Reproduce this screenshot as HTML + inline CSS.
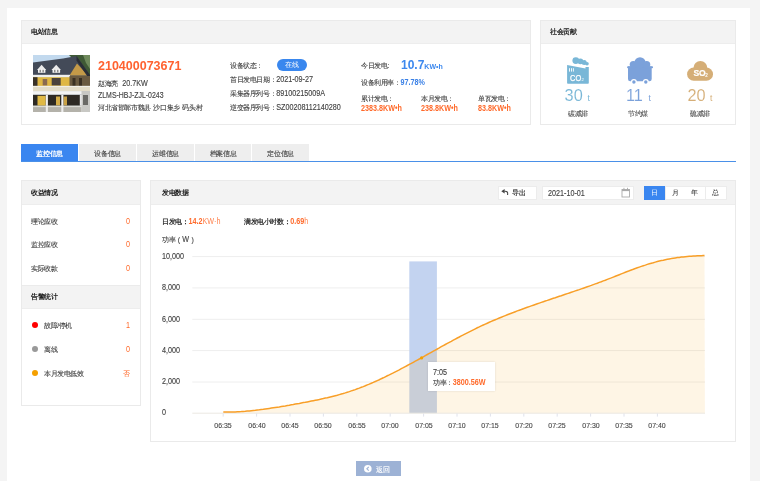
<!DOCTYPE html>
<html><head><meta charset="utf-8">
<style>
*{margin:0;padding:0;box-sizing:border-box}
html,body{width:760px;height:481px;overflow:hidden;background:#f4f4f4;font-family:"Liberation Sans",sans-serif;font-size:7px;color:#555}
.a{position:absolute;white-space:nowrap;will-change:transform}
#wrap{position:absolute;left:7px;top:8px;width:743px;height:480px;background:#fff}
.panel{position:absolute;border:1px solid #eaeaea;background:#fff}
.ph{position:absolute;left:0;top:0;right:0;background:#f3f3f3;border-bottom:1px solid #ededed}
.ht{font-weight:bold;color:#222;font-size:7px;line-height:10.4px;letter-spacing:-0.4px}
.t{line-height:12px;font-size:7px;letter-spacing:-0.4px;color:#444;-webkit-text-stroke:0.12px}
i{font-style:normal}
.t i{font-size:7.2px;letter-spacing:0;display:inline-block;transform:scaleY(1.18);transform-origin:50% 75%}
.t b,.t.bo,.t.or{-webkit-text-stroke:0}
.or{color:#ff6a2b}
.xl i{display:inline-block;transform:scaleY(1.15);transform-origin:50% 75%}
.xl{width:30px;text-align:center;line-height:10px;font-size:7px;color:#444;-webkit-text-stroke:0.1px}
.tab{position:absolute;will-change:transform;top:144px;height:17px;background:#eeeeee;text-align:center;line-height:19px;font-size:7px;color:#444;letter-spacing:-0.25px;text-indent:0.25px;-webkit-text-stroke:0.12px}
</style></head><body>
<div id="wrap"></div>

<!-- 电站信息 panel -->
<div class="panel" style="left:21px;top:20px;width:510px;height:105px">
  <div class="ph" style="height:22.5px"></div>
</div>
<div class="a ht" style="left:31px;top:27px">电站信息</div>

<!-- house photo -->
<svg class="a" style="left:33px;top:55px" width="57" height="57" viewBox="0 0 57 57">
 <rect width="57" height="57" fill="#c2d9ee"/>
 <polygon points="36,0 57,0 57,30 44,30 40,4" fill="#3f5a36"/>
 <polygon points="50,0 57,0 57,14 53,8" fill="#6f8a5c"/>
 <polygon points="0,7.5 30,3.5 43.5,1 57,20 57,22 0,22" fill="#434a58"/>
 <polygon points="44,8.5 36.5,20.5 55,20.5" fill="#c49a48"/>
 <polygon points="43.5,1 57,20 57,23 55.5,23 43.5,5.5" fill="#2a2e36"/>
 <polygon points="4,15 8.6,9.8 13.2,15" fill="#ececec"/>
 <rect x="5" y="14.2" width="7.4" height="3.6" fill="#f4f4f4"/>
 <rect x="6.5" y="14.8" width="1.5" height="2.6" fill="#8d8d8d"/><rect x="9.4" y="14.8" width="1.5" height="2.6" fill="#8d8d8d"/>
 <polygon points="18.5,15 23.2,9.8 27.9,15" fill="#ececec"/>
 <rect x="19.5" y="14.2" width="7.6" height="3.6" fill="#f4f4f4"/>
 <rect x="21" y="14.8" width="1.5" height="2.6" fill="#8d8d8d"/><rect x="24" y="14.8" width="1.5" height="2.6" fill="#8d8d8d"/>
 <rect x="0" y="19.8" width="37" height="2.4" fill="#efefef"/>
 <rect x="0" y="22.2" width="37" height="9.3" fill="#dfb744"/>
 <rect x="36.5" y="21" width="20.5" height="10.5" fill="#6a5a40"/>
 <rect x="0" y="22.2" width="4.5" height="9.3" fill="#3a3228"/>
 <rect x="9.7" y="24" width="4.5" height="6.5" fill="#8a6a50"/>
 <rect x="18.7" y="23" width="9" height="7.5" fill="#4b423c"/>
 <rect x="39.5" y="23" width="3" height="8" fill="#3a3022"/><rect x="46" y="23" width="3" height="8" fill="#3a3022"/>
 <rect x="0" y="30.8" width="57" height="5.8" fill="#e4ddc8"/>
 <rect x="0" y="31.2" width="57" height="0.7" fill="#f6f6f6"/>
 <rect x="0" y="36.3" width="57" height="3.5" fill="#f4f4f4"/>
 <rect x="0" y="39.8" width="57" height="11" fill="#2e2a24"/>
 <rect x="4.5" y="40.8" width="8.2" height="10" fill="#e0b945"/>
 <rect x="23" y="41.5" width="4" height="9" fill="#d4ad48"/>
 <rect x="30.5" y="41.5" width="3.5" height="9" fill="#c9a145"/>
 <rect x="48.5" y="36" width="8.5" height="21" fill="#c8c8c4"/>
 <rect x="50" y="40" width="5" height="10" fill="#6a6a66"/>
 <rect x="12.8" y="39.8" width="2.1" height="17.2" fill="#f2f2f2"/>
 <rect x="28.3" y="39.8" width="2.1" height="17.2" fill="#f2f2f2"/>
 <rect x="46.8" y="39.8" width="2.1" height="17.2" fill="#e6e6e6"/>
 <rect x="0" y="50.5" width="48.5" height="6.5" fill="#b4b2aa"/>
 <rect x="0" y="51.2" width="48.5" height="0.9" fill="#e6e6e2"/>
 <rect x="12.8" y="50.5" width="2.1" height="6.5" fill="#eeeeee"/><rect x="28.3" y="50.5" width="2.1" height="6.5" fill="#eeeeee"/>
</svg>

<div class="a" style="left:98px;top:58px;font-size:12.5px;font-weight:bold;color:#ff6230;line-height:16px"><i>210400073671</i></div>
<div class="a t" style="left:98px;top:78px">赵海亮<i style="margin-left:4.5px">20.7KW</i></div>
<div class="a t" style="left:98px;top:90px"><i style="font-size:6.95px">ZLMS-HBJ-ZJL-0243</i></div>
<div class="a t" style="left:98px;top:102px">河北省邯郸市魏县<span style="margin-left:2.6px">沙口集乡</span><span style="margin-left:2.6px">码头村</span></div>

<div class="a t" style="left:230px;top:60px">设备状态：</div>
<div class="a" style="left:277px;top:59px;width:30px;height:12px;border-radius:6px;background:#3987ee;color:#fff;text-align:center;line-height:12px;font-size:7px">在线</div>
<div class="a t" style="left:230px;top:74px">首日发电日期：<i>2021-09-27</i></div>
<div class="a t" style="left:230px;top:88px">采集器序列号：<i>89100215009A</i></div>
<div class="a t" style="left:230px;top:102px">逆变器序列号：<i>SZ00208112140280</i></div>

<div class="a t" style="left:361px;top:60px">今日发电:</div>
<div class="a" style="left:401px;top:57px;line-height:16px;color:#3c88ee;font-weight:bold"><span style="font-size:12px"><i>10.7</i></span><span style="font-size:7px"><i>KW•h</i></span></div>
<div class="a t" style="left:361px;top:77px">设备利用率：<b style="color:#3a80e6"><i>97.78%</i></b></div>
<div class="a t" style="left:361px;top:93px">累计发电：</div>
<div class="a t or bo" style="left:361px;top:103px;font-weight:bold"><i>2383.8KW•h</i></div>
<div class="a t" style="left:421px;top:93px">本月发电：</div>
<div class="a t or bo" style="left:421px;top:103px;font-weight:bold"><i>238.8KW•h</i></div>
<div class="a t" style="left:478px;top:93px">单瓦发电：</div>
<div class="a t or bo" style="left:478px;top:103px;font-weight:bold"><i>83.8KW•h</i></div>

<!-- 社会贡献 -->
<div class="panel" style="left:540px;top:20px;width:196px;height:105px">
  <div class="ph" style="height:22.5px"></div>
</div>
<div class="a ht" style="left:550px;top:27px">社会贡献</div>


<!-- social icons -->
<svg class="a" style="left:0;top:0" width="760" height="130" viewBox="0 0 760 130">
 <g fill="#79b7d7">
  <path d="M567.1,65.1 L585.5,68.5 L585.5,67 L588.8,67 L588.8,83 Q588.8,83.8 588,83.8 L567.9,83.8 Q567.1,83.8 567.1,83 Z"/>
  <circle cx="575.8" cy="60.6" r="3.4"/><circle cx="580.4" cy="61.3" r="2.9"/><circle cx="584.2" cy="62.5" r="2.5"/><circle cx="587" cy="63.8" r="1.8"/>
 </g>
 <g fill="#fff"><rect x="569.1" y="68.2" width="0.9" height="3.4"/><rect x="571" y="68.2" width="0.9" height="3.4"/><rect x="572.9" y="68.2" width="0.9" height="3.4"/></g>
 <text x="570" y="80.6" font-family="Liberation Sans" font-size="9" fill="#fff" stroke="#fff" stroke-width="0.25" textLength="11.2" lengthAdjust="spacingAndGlyphs">CO</text>
 <text x="581.6" y="80.9" font-family="Liberation Sans" font-size="4.2" fill="#fff">2</text>

 <g fill="#7ba1da">
  <rect x="627.1" y="66.2" width="25.9" height="2" rx="0.8"/>
  <path d="M628,66.5 L651.7,66.5 L651.7,79 Q651.7,81.3 649.4,81.3 L630.3,81.3 Q628,81.3 628,79 Z"/>
  <circle cx="633.4" cy="64.6" r="3.7"/><circle cx="640" cy="62.8" r="5.6"/><circle cx="646.6" cy="64.6" r="3.7"/>
 </g>
 <circle cx="633.9" cy="82" r="3" fill="#fff"/><circle cx="645.8" cy="82" r="3" fill="#fff"/>
 <circle cx="633.9" cy="82" r="1.7" fill="#7ba1da"/><circle cx="645.8" cy="82" r="1.7" fill="#7ba1da"/>

 <g fill="#d5ae77">
  <circle cx="700.4" cy="67.9" r="6.9"/>
  <rect x="687.1" y="67.5" width="25.9" height="13.3" rx="6.6"/>
 </g>
 <text x="693.4" y="76.4" font-family="Liberation Sans" font-size="8.6" font-weight="bold" fill="#fff" stroke="#fff" stroke-width="0.2">SO</text>
 <text x="705.2" y="76.6" font-family="Liberation Sans" font-size="4.6" font-weight="bold" fill="#fff">2</text>
</svg>
<svg class="a" style="left:0;top:0" width="760" height="130" viewBox="0 0 760 130">
 <g font-family="Liberation Sans" stroke="#fff" stroke-width="0.1">
 <text x="564.6" y="101.4" font-size="16.3" fill="#79b7d7">30</text><text x="587.4" y="101.4" font-size="8.5" fill="#79b7d7" stroke-width="0">t</text>
 <text x="626" y="101.4" font-size="16.3" fill="#7ba1da">11</text><text x="648.6" y="101.4" font-size="8.5" fill="#7ba1da" stroke-width="0">t</text>
 <text x="687.4" y="101.4" font-size="16.3" fill="#d5ae77">20</text><text x="710" y="101.4" font-size="8.5" fill="#d5ae77" stroke-width="0">t</text>
 </g>
</svg>
<div class="a t" style="left:567.5px;top:108px;color:#555">碳减排</div>
<div class="a t" style="left:627.5px;top:108px;color:#555">节约煤</div>
<div class="a t" style="left:690px;top:108px;color:#555">硫减排</div>

<!-- tabs -->
<div class="tab" style="left:21px;width:57px;background:#3a86f0;color:#fff;font-weight:bold;-webkit-text-stroke:0">监控信息</div>
<div class="tab" style="left:79px;width:57px">设备信息</div>
<div class="tab" style="left:137px;width:57px">运维信息</div>
<div class="tab" style="left:195px;width:56px">档案信息</div>
<div class="tab" style="left:252px;width:57px">定位信息</div>
<div class="a" style="left:21px;top:160.6px;width:715px;height:1.4px;background:#4a90e8"></div>

<!-- 收益情况 -->
<div class="panel" style="left:21px;top:180px;width:120px;height:226px">
  <div class="ph" style="height:24px"></div>
  <div class="ph" style="top:104px;height:24px;border-top:1px solid #ebebeb"></div>
</div>
<div class="a ht" style="left:31px;top:188px">收益情况</div>
<div class="a t" style="left:31px;top:216px">理论应收</div><div class="a t or" style="left:126px;top:216px"><i>0</i></div>
<div class="a t" style="left:31px;top:239px">监控应收</div><div class="a t or" style="left:126px;top:239px"><i>0</i></div>
<div class="a t" style="left:31px;top:263px">实际收款</div><div class="a t or" style="left:126px;top:263px"><i>0</i></div>
<div class="a ht" style="left:31px;top:292px">告警统计</div>
<div class="a" style="left:32px;top:322px;width:6px;height:6px;border-radius:3px;background:#f00"></div>
<div class="a t" style="left:44px;top:320px">故障/停机</div><div class="a t or" style="left:126px;top:320px"><i>1</i></div>
<div class="a" style="left:32px;top:346px;width:6px;height:6px;border-radius:3px;background:#999"></div>
<div class="a t" style="left:44px;top:344px">离线</div><div class="a t or" style="left:126px;top:344px"><i>0</i></div>
<div class="a" style="left:32px;top:370px;width:6px;height:6px;border-radius:3px;background:#f5a000"></div>
<div class="a t" style="left:44px;top:368px">本月发电低效</div><div class="a t or" style="left:123px;top:368px">否</div>

<!-- 发电数据 -->
<div class="panel" style="left:150px;top:180px;width:586px;height:262px">
  <div class="ph" style="height:24px"></div>
</div>
<div class="a ht" style="left:162px;top:188px">发电数据</div>



<!-- chart controls -->
<div class="a" style="left:497.5px;top:185.8px;width:38.5px;height:13.6px;background:#fff;border:1px solid #ececec"></div>
<svg class="a" style="left:500px;top:188px" width="10" height="9" viewBox="0 0 10 9"><path d="M4.3,3.3 C6.6,3 8.2,3.6 7.6,7" fill="none" stroke="#444" stroke-width="1.1"/><path d="M1.3,3.3 L4.6,1.1 L4.6,5.5 Z" fill="#444"/></svg>
<div class="a t" style="left:512.3px;top:187.3px;color:#222;letter-spacing:-0.3px">导出</div>
<div class="a" style="left:541.8px;top:185.8px;width:91.5px;height:13.6px;background:#fff;border:1px solid #ececec"></div>
<div class="a t" style="left:548.3px;top:187.5px;color:#444"><i>2021-10-01</i></div>
<svg class="a" style="left:621px;top:187px" width="10" height="11" viewBox="0 0 10 11"><rect x="1" y="2.5" width="7.5" height="7.5" fill="none" stroke="#aaa" stroke-width="0.9"/><rect x="1" y="2.5" width="7.5" height="1.6" fill="#aaa"/><rect x="2.5" y="0.8" width="0.9" height="2.5" fill="#aaa"/><rect x="6.1" y="0.8" width="0.9" height="2.5" fill="#aaa"/></svg>
<div class="a" style="left:644.2px;top:185.6px;width:20.5px;height:14px;background:#3a86f0;color:#fff;text-align:center;line-height:14px">日</div>
<div class="a" style="left:664.7px;top:185.6px;width:20.5px;height:14px;background:#fff;border:1px solid #ececec;color:#222;text-align:center;line-height:12px">月</div>
<div class="a" style="left:685.2px;top:185.6px;width:20.5px;height:14px;background:#fff;border:1px solid #ececec;border-left:none;color:#222;text-align:center;line-height:12px">年</div>
<div class="a" style="left:705.7px;top:185.6px;width:20.5px;height:14px;background:#fff;border:1px solid #ececec;border-left:none;color:#222;text-align:center;line-height:12px">总</div>

<!-- chart -->
<div class="a t" style="left:162px;top:216px"><b style="color:#333">日发电：</b><b class="or"><i>14.2</i></b><span class="or" style="-webkit-text-stroke:0;color:#ff8450"><i>KW·h</i></span></div>
<div class="a t" style="left:244px;top:216px"><b style="color:#333">满发电小时数：</b><b class="or"><i>0.69</i></b><span class="or" style="-webkit-text-stroke:0;color:#ff8450"><i>h</i></span></div>
<div class="a t" style="left:162px;top:234px">功率<span style="margin-left:2.5px">(</span><i style="margin:0 2.5px">W</i>)</div>
<div class="a t yl" style="left:162.2px;top:250.8px"><i>10,000</i></div><div class="a t yl" style="left:162.2px;top:282.1px"><i>8,000</i></div><div class="a t yl" style="left:162.2px;top:313.5px"><i>6,000</i></div><div class="a t yl" style="left:162.2px;top:344.8px"><i>4,000</i></div><div class="a t yl" style="left:162.2px;top:376.2px"><i>2,000</i></div><div class="a t yl" style="left:162.2px;top:406.7px"><i>0</i></div>
<svg class="a" style="left:0;top:0" width="760" height="481" viewBox="0 0 760 481">
<line x1="192.3" y1="256.6" x2="705" y2="256.6" stroke="#eeeeee" stroke-width="1"/><line x1="192.3" y1="287.9" x2="705" y2="287.9" stroke="#eeeeee" stroke-width="1"/><line x1="192.3" y1="319.3" x2="705" y2="319.3" stroke="#eeeeee" stroke-width="1"/><line x1="192.3" y1="350.6" x2="705" y2="350.6" stroke="#eeeeee" stroke-width="1"/><line x1="192.3" y1="382" x2="705" y2="382" stroke="#eeeeee" stroke-width="1"/>
<rect x="409.3" y="261.4" width="27.6" height="151.8" fill="#c3d3f0"/>
<path d="M223.3,412.1 L225.3,412.1 L227.3,412.1 L229.3,412.1 L231.3,412.0 L233.3,412.0 L235.3,411.9 L237.3,411.8 L239.3,411.7 L241.3,411.6 L243.3,411.4 L245.3,411.3 L247.3,411.1 L249.3,410.9 L251.3,410.7 L253.3,410.5 L255.3,410.3 L257.3,410.0 L259.3,409.8 L261.3,409.5 L263.3,409.3 L265.3,409.0 L267.3,408.7 L269.3,408.4 L271.3,408.1 L273.3,407.8 L275.3,407.5 L277.3,407.2 L279.3,406.9 L281.3,406.5 L283.3,406.2 L285.3,405.9 L287.3,405.5 L289.3,405.2 L291.3,404.8 L293.3,404.5 L295.3,404.1 L297.3,403.7 L299.3,403.4 L301.3,403.0 L303.3,402.6 L305.3,402.3 L307.3,401.9 L309.3,401.5 L311.3,401.1 L313.3,400.7 L315.3,400.3 L317.3,399.9 L319.3,399.5 L321.3,399.0 L323.3,398.6 L325.3,398.1 L327.3,397.7 L329.3,397.2 L331.3,396.7 L333.3,396.2 L335.3,395.7 L337.3,395.2 L339.3,394.6 L341.3,394.0 L343.3,393.5 L345.3,392.9 L347.3,392.2 L349.3,391.6 L351.3,390.9 L353.3,390.3 L355.3,389.6 L357.3,388.8 L359.3,388.1 L361.3,387.3 L363.3,386.6 L365.3,385.8 L367.3,384.9 L369.3,384.1 L371.3,383.2 L373.3,382.4 L375.3,381.5 L377.3,380.6 L379.3,379.7 L381.3,378.7 L383.3,377.8 L385.3,376.8 L387.3,375.8 L389.3,374.9 L391.3,373.9 L393.3,372.9 L395.3,371.8 L397.3,370.8 L399.3,369.8 L401.3,368.7 L403.3,367.7 L405.3,366.6 L407.3,365.5 L409.3,364.4 L411.3,363.4 L413.3,362.3 L415.3,361.2 L417.3,360.1 L419.3,359.0 L421.3,357.9 L423.3,356.8 L425.3,355.6 L427.3,354.5 L429.3,353.4 L431.3,352.3 L433.3,351.2 L435.3,350.1 L437.3,349.0 L439.3,347.9 L441.3,346.7 L443.3,345.6 L445.3,344.5 L447.3,343.4 L449.3,342.3 L451.3,341.3 L453.3,340.2 L455.3,339.1 L457.3,338.0 L459.3,337.0 L461.3,335.9 L463.3,334.9 L465.3,333.8 L467.3,332.8 L469.3,331.8 L471.3,330.8 L473.3,329.8 L475.3,328.8 L477.3,327.8 L479.3,326.9 L481.3,325.9 L483.3,325.0 L485.3,324.1 L487.3,323.2 L489.3,322.3 L491.3,321.4 L493.3,320.5 L495.3,319.7 L497.3,318.9 L499.3,318.0 L501.3,317.2 L503.3,316.4 L505.3,315.6 L507.3,314.8 L509.3,314.0 L511.3,313.2 L513.3,312.5 L515.3,311.7 L517.3,310.9 L519.3,310.2 L521.3,309.5 L523.3,308.7 L525.3,308.0 L527.3,307.3 L529.3,306.6 L531.3,305.9 L533.3,305.2 L535.3,304.5 L537.3,303.8 L539.3,303.1 L541.3,302.4 L543.3,301.7 L545.3,301.0 L547.3,300.4 L549.3,299.7 L551.3,299.0 L553.3,298.3 L555.3,297.7 L557.3,297.0 L559.3,296.3 L561.3,295.7 L563.3,295.0 L565.3,294.3 L567.3,293.6 L569.3,293.0 L571.3,292.3 L573.3,291.6 L575.3,290.9 L577.3,290.2 L579.3,289.6 L581.3,288.9 L583.3,288.2 L585.3,287.5 L587.3,286.8 L589.3,286.1 L591.3,285.4 L593.3,284.6 L595.3,283.9 L597.3,283.2 L599.3,282.4 L601.3,281.7 L603.3,280.9 L605.3,280.2 L607.3,279.4 L609.3,278.6 L611.3,277.9 L613.3,277.1 L615.3,276.3 L617.3,275.5 L619.3,274.7 L621.3,273.9 L623.3,273.1 L625.3,272.3 L627.3,271.5 L629.3,270.8 L631.3,270.0 L633.3,269.3 L635.3,268.5 L637.3,267.8 L639.3,267.1 L641.3,266.4 L643.3,265.7 L645.3,265.1 L647.3,264.4 L649.3,263.8 L651.3,263.2 L653.3,262.7 L655.3,262.1 L657.3,261.6 L659.3,261.1 L661.3,260.6 L663.3,260.2 L665.3,259.7 L667.3,259.3 L669.3,258.9 L671.3,258.6 L673.3,258.2 L675.3,257.9 L677.3,257.6 L679.3,257.4 L681.3,257.1 L683.3,256.9 L685.3,256.7 L687.3,256.5 L689.3,256.3 L691.3,256.2 L693.3,256.0 L695.3,255.9 L697.3,255.8 L699.3,255.7 L701.3,255.7 L703.3,255.6 L704.5,255.6 L704.9,413.2 L223.2,413.2 Z" fill="rgba(245,170,45,0.12)"/>
<line x1="192.3" y1="413.2" x2="705" y2="413.2" stroke="#ebe8e2" stroke-width="1"/>
<line x1="223.2" y1="413.6" x2="223.2" y2="416.6" stroke="#d8dbe6" stroke-width="0.8"/><line x1="256.6" y1="413.6" x2="256.6" y2="416.6" stroke="#d8dbe6" stroke-width="0.8"/><line x1="290.0" y1="413.6" x2="290.0" y2="416.6" stroke="#d8dbe6" stroke-width="0.8"/><line x1="323.4" y1="413.6" x2="323.4" y2="416.6" stroke="#d8dbe6" stroke-width="0.8"/><line x1="356.8" y1="413.6" x2="356.8" y2="416.6" stroke="#d8dbe6" stroke-width="0.8"/><line x1="390.2" y1="413.6" x2="390.2" y2="416.6" stroke="#d8dbe6" stroke-width="0.8"/><line x1="423.6" y1="413.6" x2="423.6" y2="416.6" stroke="#d8dbe6" stroke-width="0.8"/><line x1="457.0" y1="413.6" x2="457.0" y2="416.6" stroke="#d8dbe6" stroke-width="0.8"/><line x1="490.4" y1="413.6" x2="490.4" y2="416.6" stroke="#d8dbe6" stroke-width="0.8"/><line x1="523.8" y1="413.6" x2="523.8" y2="416.6" stroke="#d8dbe6" stroke-width="0.8"/><line x1="557.2" y1="413.6" x2="557.2" y2="416.6" stroke="#d8dbe6" stroke-width="0.8"/><line x1="590.6" y1="413.6" x2="590.6" y2="416.6" stroke="#d8dbe6" stroke-width="0.8"/><line x1="624.0" y1="413.6" x2="624.0" y2="416.6" stroke="#d8dbe6" stroke-width="0.8"/><line x1="657.4" y1="413.6" x2="657.4" y2="416.6" stroke="#d8dbe6" stroke-width="0.8"/>
<path d="M223.3,412.1 L225.3,412.1 L227.3,412.1 L229.3,412.1 L231.3,412.0 L233.3,412.0 L235.3,411.9 L237.3,411.8 L239.3,411.7 L241.3,411.6 L243.3,411.4 L245.3,411.3 L247.3,411.1 L249.3,410.9 L251.3,410.7 L253.3,410.5 L255.3,410.3 L257.3,410.0 L259.3,409.8 L261.3,409.5 L263.3,409.3 L265.3,409.0 L267.3,408.7 L269.3,408.4 L271.3,408.1 L273.3,407.8 L275.3,407.5 L277.3,407.2 L279.3,406.9 L281.3,406.5 L283.3,406.2 L285.3,405.9 L287.3,405.5 L289.3,405.2 L291.3,404.8 L293.3,404.5 L295.3,404.1 L297.3,403.7 L299.3,403.4 L301.3,403.0 L303.3,402.6 L305.3,402.3 L307.3,401.9 L309.3,401.5 L311.3,401.1 L313.3,400.7 L315.3,400.3 L317.3,399.9 L319.3,399.5 L321.3,399.0 L323.3,398.6 L325.3,398.1 L327.3,397.7 L329.3,397.2 L331.3,396.7 L333.3,396.2 L335.3,395.7 L337.3,395.2 L339.3,394.6 L341.3,394.0 L343.3,393.5 L345.3,392.9 L347.3,392.2 L349.3,391.6 L351.3,390.9 L353.3,390.3 L355.3,389.6 L357.3,388.8 L359.3,388.1 L361.3,387.3 L363.3,386.6 L365.3,385.8 L367.3,384.9 L369.3,384.1 L371.3,383.2 L373.3,382.4 L375.3,381.5 L377.3,380.6 L379.3,379.7 L381.3,378.7 L383.3,377.8 L385.3,376.8 L387.3,375.8 L389.3,374.9 L391.3,373.9 L393.3,372.9 L395.3,371.8 L397.3,370.8 L399.3,369.8 L401.3,368.7 L403.3,367.7 L405.3,366.6 L407.3,365.5 L409.3,364.4 L411.3,363.4 L413.3,362.3 L415.3,361.2 L417.3,360.1 L419.3,359.0 L421.3,357.9 L423.3,356.8 L425.3,355.6 L427.3,354.5 L429.3,353.4 L431.3,352.3 L433.3,351.2 L435.3,350.1 L437.3,349.0 L439.3,347.9 L441.3,346.7 L443.3,345.6 L445.3,344.5 L447.3,343.4 L449.3,342.3 L451.3,341.3 L453.3,340.2 L455.3,339.1 L457.3,338.0 L459.3,337.0 L461.3,335.9 L463.3,334.9 L465.3,333.8 L467.3,332.8 L469.3,331.8 L471.3,330.8 L473.3,329.8 L475.3,328.8 L477.3,327.8 L479.3,326.9 L481.3,325.9 L483.3,325.0 L485.3,324.1 L487.3,323.2 L489.3,322.3 L491.3,321.4 L493.3,320.5 L495.3,319.7 L497.3,318.9 L499.3,318.0 L501.3,317.2 L503.3,316.4 L505.3,315.6 L507.3,314.8 L509.3,314.0 L511.3,313.2 L513.3,312.5 L515.3,311.7 L517.3,310.9 L519.3,310.2 L521.3,309.5 L523.3,308.7 L525.3,308.0 L527.3,307.3 L529.3,306.6 L531.3,305.9 L533.3,305.2 L535.3,304.5 L537.3,303.8 L539.3,303.1 L541.3,302.4 L543.3,301.7 L545.3,301.0 L547.3,300.4 L549.3,299.7 L551.3,299.0 L553.3,298.3 L555.3,297.7 L557.3,297.0 L559.3,296.3 L561.3,295.7 L563.3,295.0 L565.3,294.3 L567.3,293.6 L569.3,293.0 L571.3,292.3 L573.3,291.6 L575.3,290.9 L577.3,290.2 L579.3,289.6 L581.3,288.9 L583.3,288.2 L585.3,287.5 L587.3,286.8 L589.3,286.1 L591.3,285.4 L593.3,284.6 L595.3,283.9 L597.3,283.2 L599.3,282.4 L601.3,281.7 L603.3,280.9 L605.3,280.2 L607.3,279.4 L609.3,278.6 L611.3,277.9 L613.3,277.1 L615.3,276.3 L617.3,275.5 L619.3,274.7 L621.3,273.9 L623.3,273.1 L625.3,272.3 L627.3,271.5 L629.3,270.8 L631.3,270.0 L633.3,269.3 L635.3,268.5 L637.3,267.8 L639.3,267.1 L641.3,266.4 L643.3,265.7 L645.3,265.1 L647.3,264.4 L649.3,263.8 L651.3,263.2 L653.3,262.7 L655.3,262.1 L657.3,261.6 L659.3,261.1 L661.3,260.6 L663.3,260.2 L665.3,259.7 L667.3,259.3 L669.3,258.9 L671.3,258.6 L673.3,258.2 L675.3,257.9 L677.3,257.6 L679.3,257.4 L681.3,257.1 L683.3,256.9 L685.3,256.7 L687.3,256.5 L689.3,256.3 L691.3,256.2 L693.3,256.0 L695.3,255.9 L697.3,255.8 L699.3,255.7 L701.3,255.7 L703.3,255.6 L704.5,255.6" fill="none" stroke="#f89f28" stroke-width="1.5"/>
<circle cx="421.6" cy="357.9" r="1.6" fill="#f5a000"/>
</svg>
<div class="a xl" style="left:208.2px;top:421px"><i>06:35</i></div><div class="a xl" style="left:241.6px;top:421px"><i>06:40</i></div><div class="a xl" style="left:275.0px;top:421px"><i>06:45</i></div><div class="a xl" style="left:308.4px;top:421px"><i>06:50</i></div><div class="a xl" style="left:341.8px;top:421px"><i>06:55</i></div><div class="a xl" style="left:375.2px;top:421px"><i>07:00</i></div><div class="a xl" style="left:408.6px;top:421px"><i>07:05</i></div><div class="a xl" style="left:442.0px;top:421px"><i>07:10</i></div><div class="a xl" style="left:475.4px;top:421px"><i>07:15</i></div><div class="a xl" style="left:508.8px;top:421px"><i>07:20</i></div><div class="a xl" style="left:542.2px;top:421px"><i>07:25</i></div><div class="a xl" style="left:575.6px;top:421px"><i>07:30</i></div><div class="a xl" style="left:609.0px;top:421px"><i>07:35</i></div><div class="a xl" style="left:642.4px;top:421px"><i>07:40</i></div>
<div class="a" style="left:428px;top:362px;width:67px;height:29px;background:#fff;box-shadow:0 0 2px rgba(0,0,0,0.12)"></div>
<div class="a t" style="left:433px;top:367.3px"><i>7:05</i></div>
<div class="a t" style="left:433px;top:377.4px">功率：<b class="or"><i>3800.56W</i></b></div>

<!-- back button -->
<div class="a" style="left:356px;top:461.3px;width:44.8px;height:14.8px;background:#9db2d5"></div>
<svg class="a" style="left:363px;top:464px" width="10" height="10" viewBox="0 0 10 10"><circle cx="4.8" cy="4.8" r="3.8" fill="#fff"/><path d="M5.8,2.9 L3.9,4.8 L5.8,6.7" fill="none" stroke="#9fb4d8" stroke-width="1.2"/></svg>
<div class="a t" style="left:376px;top:463.5px;color:#fff">返回</div>
</body></html>
